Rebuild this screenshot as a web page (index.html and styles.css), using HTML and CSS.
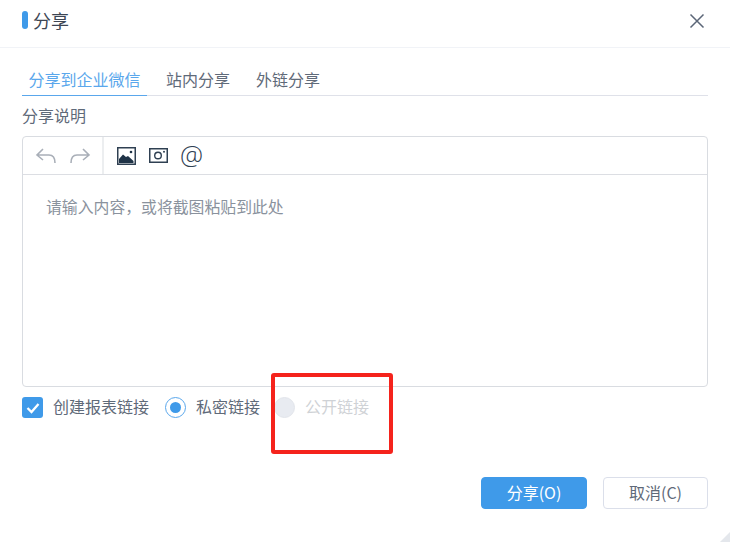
FILE: index.html
```html
<!DOCTYPE html>
<html lang="zh-CN">
<head>
<meta charset="utf-8">
<title>分享</title>
<link rel="stylesheet" href="styles.css">
</head>
<body>
<div class="dialog">
  <header class="head">
    <div class="title"><span class="title-bar"></span><span>分享</span></div>
    <svg class="close" width="16" height="16" viewBox="0 0 16 16"><path d="M1.5 1.5 14.5 14.5M14.5 1.5 1.5 14.5" stroke="#5b6677" stroke-width="1.5" fill="none"/></svg>
  </header>
  <main class="body">
    <nav class="tabs">
      <span class="tab active">分享到企业微信</span>
      <span class="tab">站内分享</span>
      <span class="tab">外链分享</span>
    </nav>
    <div class="label">分享说明</div>
    <section class="editor">
      <div class="toolbar">
        <div class="history">
          <svg width="22" height="18" viewBox="0 0 22 18"><path d="M8 2 2 8 8 13M2 8H14C18 8 20 11 20 16" stroke="#a9afb8" stroke-width="1.6" fill="none"/></svg>
          <svg width="22" height="18" viewBox="0 0 22 18"><path d="M14 2 20 8 14 13M20 8H8C4 8 2 11 2 16" stroke="#a9afb8" stroke-width="1.6" fill="none"/></svg>
        </div>
        <div class="insert">
          <svg width="19" height="18" viewBox="0 0 19 18"><rect x="0.75" y="0.75" width="17.5" height="16.5" fill="#fff" stroke="#2f4052" stroke-width="1.5"/><path d="M2 16V12L6 7.5 9 10 11 9 16.500 14V16Z" fill="#1f3347"/><circle cx="14" cy="5" r="1.300" fill="#1f3347"/></svg>
          <svg width="19" height="15" viewBox="0 0 19 15"><rect x="0.75" y="0.75" width="17.5" height="13.500" fill="#fff" stroke="#2f4052" stroke-width="1.5"/><circle cx="9" cy="7.500" r="3.300" fill="none" stroke="#2f4052" stroke-width="1.4"/><circle cx="15" cy="3.800" r="1" fill="#2f4052"/></svg>
          <span class="at">@</span>
        </div>
      </div>
      <div class="content">请输入内容，或将截图粘贴到此处</div>
    </section>
    <div class="options">
      <label class="opt first">
        <span class="check"><svg width="14" height="12" viewBox="0 0 14 12"><path d="M1.500 6 5.500 10 12.500 2" stroke="#fff" stroke-width="2.300" fill="none"/></svg></span>
        <span class="opt-text">创建报表链接</span>
      </label>
      <label class="opt second"><span class="radio on"><span class="dot"></span></span><span class="opt-text">私密链接</span></label>
      <label class="opt disabled"><span class="radio off"></span><span class="opt-text">公开链接</span></label>
    </div>
    <footer class="actions">
      <button class="btn primary">分享(O)</button>
      <button class="btn">取消(C)</button>
    </footer>
  </main>
  <div class="annotation"></div>
  <div class="grip"></div>
</div>
</body>
</html>
```

FILE: styles.css
```css
* { box-sizing: border-box; }
html, body { margin: 0; padding: 0; }
body {
  width: 730px;
  height: 542px;
  background: #fff;
  overflow: hidden;
  font-family: "Noto Sans CJK SC", "Liberation Sans", sans-serif;
  color: #5f6a79;
}
.dialog { position: relative; width: 730px; height: 542px; }
.head {
  height: 48px;
  border-bottom: 1px solid #f1f3f7;
  display: flex;
  align-items: center;
  justify-content: space-between;
  padding: 0 25px 7px 22px;
}
.title { display: flex; align-items: center; gap: 5px; font-size: 18px; line-height: 26px; color: #3d4654; }
.title-bar { width: 6px; height: 18px; border-radius: 3px; background: #3f9ae9; }
.close { display: block; margin-top: 1px; }
.body { padding: 0 22px; }
.tabs {
  display: flex;
  height: 48px;
  align-items: flex-end;
  border-bottom: 1px solid #dfe1e9;
}
.tab {
  font-size: 16px;
  line-height: 24px;
  height: 29px;
  padding: 0 13px;
  margin-bottom: -1px;
}
.tab.active {
  color: #5aa7ec;
  padding: 0 7px 0 6.500px;
  width: 125px;
  margin-right: 6px;
  border-bottom: 1px solid #5aa7ec;
  white-space: nowrap;
}
.label { font-size: 16px; line-height: 24px; margin-top: 7px; height: 33px; }
.editor {
  height: 251px;
  border: 1px solid #d9dce1;
  border-radius: 4px;
}
.toolbar {
  height: 38px;
  border-bottom: 1px solid #dcdee3;
  display: flex;
}
.history {
  width: 81px;
  border-right: 2px solid #eceef0;
  display: flex;
  align-items: center;
  gap: 12px;
  padding-left: 12px;
}
.insert { display: flex; align-items: center; padding-left: 13px; gap: 13px; }
.at { font-size: 26px; line-height: 24px; color: #2f4052; font-family: "Open Sans", sans-serif; font-weight: 300; margin-left: -1px; margin-top: -3px; }
.content { padding: 20px 23px; font-size: 15.850px; line-height: 24px; color: #8a929d; }
.options { display: flex; align-items: center; height: 21px; margin-top: 10px; font-size: 16px; }
.opt { display: flex; align-items: center; }
.opt-text { padding-bottom: 4px; }
.first { gap: 10px; width: 143px; }
.second { gap: 10px; width: 109px; }
.disabled { gap: 10px; color: #cfd2d6; }
.check {
  width: 21px; height: 21px; border-radius: 3px; background: #3f9ae9;
  display: flex; align-items: center; justify-content: center;
}
.radio { width: 21px; height: 21px; border-radius: 50%; display: flex; align-items: center; justify-content: center; }
.radio.on { border: 1px solid #5aa7ec; background: #fff; }
.dot { width: 11px; height: 11px; border-radius: 50%; background: #3f9ae9; }
.radio.off { background: #e8ebf1; border: 1px solid #e2e5eb; }
.actions { display: flex; justify-content: flex-end; gap: 16px; margin-top: 59px; }
.btn {
  width: 105px; height: 32px;
  border: 1px solid #dbdfea;
  border-radius: 4px;
  background: #fff;
  color: #5f6a79;
  font: 16px/22px "Noto Sans CJK SC", "Liberation Sans", sans-serif;
  padding: 0 0 3px;
}
.btn.primary { width: 106px; background: #3f9ae9; border-color: #3f9ae9; color: #fff; }
.annotation {
  position: absolute;
  left: 271px; top: 373px;
  width: 122px; height: 81px;
  border: 4px solid #f5231c;
  border-radius: 3px;
}
.grip {
  position: absolute;
  right: 0; bottom: 0;
  width: 0; height: 0;
  border-style: solid;
  border-width: 0 0 10px 10px;
  border-color: transparent transparent #e4e7ec transparent;
}
```
